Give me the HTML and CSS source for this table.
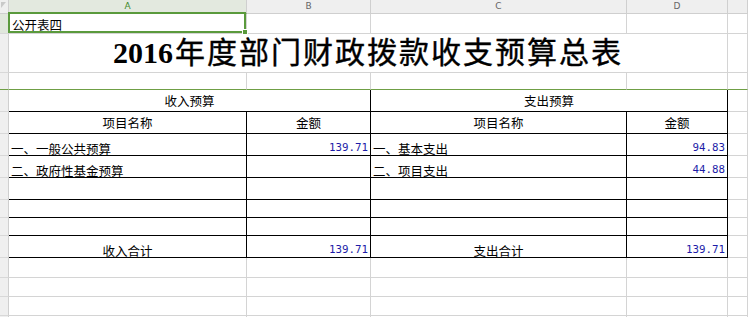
FILE: index.html
```html
<!DOCTYPE html>
<html lang="zh-CN">
<head>
<meta charset="utf-8">
<title>2016年度部门财政拨款收支预算总表</title>
<link rel="stylesheet" href="styles.css">
</head>
<body>
<div class="sheet">
  <!-- column header -->
  <div class="c corner"><svg class="tri" width="8" height="13" viewBox="0 0 8 13"><polygon points="1,2 6,2 1,8" fill="#c9c9c9"/></svg></div>
  <div class="c ch sel">A</div>
  <div class="c ch">B</div>
  <div class="c ch">C</div>
  <div class="c ch">D</div>
  <div class="c ch"></div>

  <!-- row 1 -->
  <div class="c rh rsel"></div>
  <div class="c l a1">公开表四<span class="selbox"><span class="handle"></span></span></div>
  <div class="c"></div>
  <div class="c"></div>
  <div class="c"></div>
  <div class="c"></div>

  <!-- row 2 title -->
  <div class="c rh"></div>
  <div class="c title span4"><span class="yr">2016</span>年度部门财政拨款收支预算总表</div>
  <div class="c"></div>

  <!-- row 3 -->
  <div class="c rh g"></div>
  <div class="c g"></div>
  <div class="c g"></div>
  <div class="c g"></div>
  <div class="c g"></div>
  <div class="c g"></div>

  <!-- row 4 -->
  <div class="c rh"></div>
  <div class="c mid span2 bb br">收入预算</div>
  <div class="c mid span2 bb br">支出预算</div>
  <div class="c"></div>

  <!-- row 5 -->
  <div class="c rh"></div>
  <div class="c mid bb br">项目名称</div>
  <div class="c mid bb br">金额</div>
  <div class="c mid bb br">项目名称</div>
  <div class="c mid bb br">金额</div>
  <div class="c"></div>

  <!-- row 6 -->
  <div class="c rh"></div>
  <div class="c l bb br">一、一般公共预算</div>
  <div class="c num bb br">139.71</div>
  <div class="c l bb br">一、基本支出</div>
  <div class="c num bb br">94.83</div>
  <div class="c"></div>

  <!-- row 7 -->
  <div class="c rh"></div>
  <div class="c l bb br">二、政府性基金预算</div>
  <div class="c num bb br"></div>
  <div class="c l bb br">二、项目支出</div>
  <div class="c num bb br">44.88</div>
  <div class="c"></div>

  <!-- row 8 -->
  <div class="c rh"></div>
  <div class="c bb br"></div>
  <div class="c bb br"></div>
  <div class="c bb br"></div>
  <div class="c bb br"></div>
  <div class="c"></div>

  <!-- row 9 -->
  <div class="c rh"></div>
  <div class="c bb br"></div>
  <div class="c bb br"></div>
  <div class="c bb br"></div>
  <div class="c bb br"></div>
  <div class="c"></div>

  <!-- row 10 -->
  <div class="c rh"></div>
  <div class="c bb br"></div>
  <div class="c bb br"></div>
  <div class="c bb br"></div>
  <div class="c bb br"></div>
  <div class="c"></div>

  <!-- row 11 totals -->
  <div class="c rh"></div>
  <div class="c ctr bb br">收入合计</div>
  <div class="c num bb br">139.71</div>
  <div class="c ctr bb br">支出合计</div>
  <div class="c num bb br">139.71</div>
  <div class="c"></div>

  <!-- rows 12-15 -->
  <div class="c rh"></div><div class="c"></div><div class="c"></div><div class="c"></div><div class="c"></div><div class="c"></div>
  <div class="c rh"></div><div class="c"></div><div class="c"></div><div class="c"></div><div class="c"></div><div class="c"></div>
  <div class="c rh"></div><div class="c"></div><div class="c"></div><div class="c"></div><div class="c"></div><div class="c"></div>
  <div class="c rh"></div><div class="c"></div><div class="c"></div><div class="c"></div><div class="c"></div><div class="c"></div>
</div>
</body>
</html>
```

FILE: styles.css
```css
html, body {
  margin: 0;
  padding: 0;
  background: #ffffff;
  overflow: hidden;
}

body {
  width: 748px;
  height: 317px;
  font-family: "Noto Sans CJK SC", "Noto Sans", sans-serif;
  font-size: 12.5px;
  color: #000;
}

.sheet {
  display: grid;
  grid-template-columns: 9px 238px 124px 256px 101px 1fr;
  grid-template-rows: 14px 20px 39px 17px 22px 22px 22px 22px 22px 18px 18px 22px 20px 19px 19px 2px;
  width: 748px;
  height: 317px;
  overflow: hidden;
}

.c {
  box-sizing: border-box;
  border-right: 1px solid #d4d4d4;
  border-bottom: 1px solid #d4d4d4;
  display: flex;
  align-items: flex-end;
  line-height: 13px;
  white-space: nowrap;
  min-width: 0;
  min-height: 0;
  overflow: visible;
}

.corner {
  background: #efefef;
  border-color: #cfcfcf;
}

.tri {
  display: block;
}

.ch {
  background: #efefef;
  border-color: #cfcfcf;
  justify-content: center;
  align-items: flex-start;
  font-family: "DejaVu Sans", sans-serif;
  font-size: 9px;
  line-height: 11px;
  color: #666;
  padding-top: 1px;
}

.ch.sel {
  background: #e3e9df;
  color: #3f8a2c;
  border-bottom-color: #5a9a3c;
}

.rh {
  background: #efefef;
  border-right-color: #cfcfcf;
  border-bottom-color: #d8d8d8;
}

.rh.rsel {
  background: #e0e7dc;
}

.l {
  padding-left: 2px;
}

.a1 {
  position: relative;
  align-items: center;
  padding-left: 3px;
  padding-top: 1px;
}

.selbox {
  position: absolute;
  left: -1px;
  top: -2px;
  width: 238px;
  height: 21px;
  box-sizing: border-box;
  border: 2px solid #5a9a3c;
}

.handle {
  position: absolute;
  right: -4px;
  bottom: -4px;
  width: 6px;
  height: 6px;
  box-sizing: border-box;
  background: #5a9a3c;
  border: 1px solid #ffffff;
}

.title {
  justify-content: center;
  align-items: center;
  font-family: "Liberation Serif", "Noto Sans CJK SC", serif;
  font-size: 30px;
  font-weight: 400;
  line-height: 36px;
  letter-spacing: 2px;
  -webkit-text-stroke: 0.4px #000;
}

.yr {
  font-weight: 700;
  letter-spacing: 0;
  margin-right: 2px;
  -webkit-text-stroke: 0;
}

.span4 {
  grid-column: span 4;
}

.span2 {
  grid-column: span 2;
}

.mid {
  justify-content: center;
  align-items: center;
}

.ctr {
  justify-content: center;
}

.num {
  justify-content: flex-end;
  padding-right: 2px;
  font-family: "DejaVu Sans Mono", "Liberation Mono", monospace;
  font-size: 10.8px;
  color: #1c1ca8;
  padding-bottom: 1px;
}

.g {
  border-bottom-color: #6f9f45;
}

.bb {
  border-bottom-color: #000;
}

.br {
  border-right-color: #000;
}
```
